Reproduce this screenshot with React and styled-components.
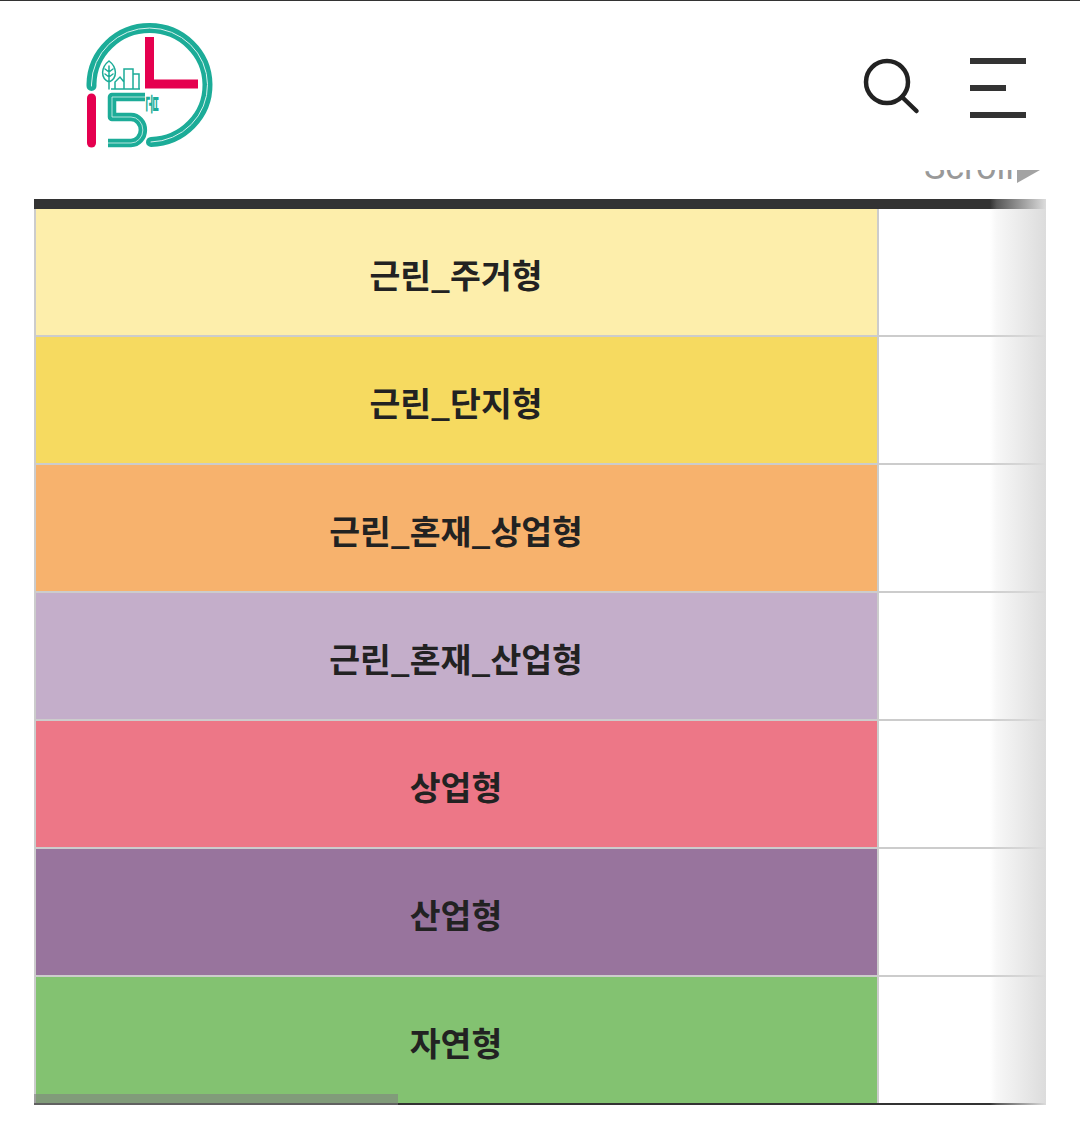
import React from 'react'
import styled, { createGlobalStyle } from 'styled-components'

const rows = [
   { label: '근린_주거형', color: '#fdeeab' },
   { label: '근린_단지형', color: '#f6da60' },
   { label: '근린_혼재_상업형', color: '#f7b26d' },
   { label: '근린_혼재_산업형', color: '#c4aeca' },
   { label: '상업형', color: '#ed7787' },
   { label: '산업형', color: '#98749d' },
   { label: '자연형', color: '#83c271' },
]

const Logo = () => (
   <LogoSvg viewBox="0 0 130 130" width="130" height="130">
      {/* offset: svg 0,0 is page 84,20 */}
      <g fill="none" strokeLinecap="round">
         <path d="M7.5 66 V64 A58 57 0 1 1 67 122" stroke="#1cac98" strokeWidth="10" />
         <path d="M7.5 66 V64 A58 57 0 1 1 67 122" stroke="#d8f2ee" strokeWidth="1" />
         <path d="M61 77 H28 V97 H47 A10.5 11.5 0 0 1 47 123 H24" stroke="#1cac98" strokeWidth="8.5" strokeLinecap="butt" strokeLinejoin="round" />
         <path d="M61 77 H28 V97 H47 A10.5 11.5 0 0 1 47 123 H24" stroke="#d8f2ee" strokeWidth="0.8" strokeLinecap="butt" />
         <path d="M65.5 17 V64 H114" stroke="#e5004f" strokeWidth="9" strokeLinecap="butt" />
         <path d="M7.5 78 V123" stroke="#e5004f" strokeWidth="9" />
         <g stroke="#1cac98" strokeWidth="1.5">
            <path d="M25 41 C17 47 16 58 25 62 C34 58 33 47 25 41 Z M25 46 V69 M25 52 L21 49 M25 52 L29 49 M25 57 L21 54 M25 57 L29 54" />
            <path d="M27 69 H56 M31 69 V62 L36 57 L40 62 M40 69 V49 H49 V69 M49 54 H55 V69" strokeLinecap="butt" />
         </g>
      </g>
      <BunText transform="translate(70 84) rotate(90) scale(1.5 0.85)" textAnchor="middle" dominantBaseline="central">분</BunText>
   </LogoSvg>
)

const SearchIcon = () => (
   <svg viewBox="0 0 58 58" width="58" height="58" fill="none" stroke="#222" strokeWidth="4.5">
      <circle cx="24" cy="25" r="21" />
      <path d="M39 40 L53.5 54" strokeLinecap="round" />
   </svg>
)

const App = () => {
   return (
      <Page>
         <GlobalStyle />
         <Header>
            <Logo />
            <Actions>
               <SearchIcon />
               <MenuButton>
                  <MenuBar />
                  <MenuBar $short />
                  <MenuBar />
               </MenuButton>
            </Actions>
         </Header>
         <ScrollHint>
            <ScrollLabel>Scroll</ScrollLabel>
            <ScrollArrow />
         </ScrollHint>
         <TableWrap>
            <Table>
               {rows.map((row) => (
                  <Row key={row.label}>
                     <NameCell $color={row.color}>{row.label}</NameCell>
                     <EmptyCell />
                  </Row>
               ))}
            </Table>
            <Fade />
            <ScrollThumb />
         </TableWrap>
      </Page>
   )
}

const GlobalStyle = createGlobalStyle`
   html, body {
      margin: 0;
      padding: 0;
      background: #fff;
   }
   body {
      font-family: "Noto Sans CJK KR", "Noto Sans", sans-serif;
   }
`

const Page = styled.div`
   width: 1080px;
   height: 1129px;
   overflow: hidden;
   border-top: 1px solid #333;
   box-sizing: border-box;
`

const Header = styled.header`
   display: flex;
   justify-content: space-between;
   align-items: flex-start;
   height: 169px;
   padding: 19px 54px 0 84px;
   box-sizing: border-box;
`

const LogoSvg = styled.svg`
   display: block;
`

const BunText = styled.text`
   font-family: "Noto Sans CJK KR", sans-serif;
   font-size: 15px;
   font-weight: 700;
   fill: #1cac98;
`

const Actions = styled.div`
   display: flex;
   align-items: flex-start;
   gap: 49px;
   padding-top: 37px;
`

const MenuButton = styled.div`
   display: flex;
   flex-direction: column;
   justify-content: space-between;
   width: 56px;
   height: 60px;
   margin-top: 1px;
`

const MenuBar = styled.span`
   display: block;
   height: 6px;
   width: ${(props) => (props.$short ? '36px' : '56px')};
   background: #333;
`

const ScrollHint = styled.div`
   display: flex;
   justify-content: flex-end;
   align-items: flex-start;
   gap: 3px;
   height: 13px;
   padding-right: 40px;
   overflow: hidden;
`

const ScrollLabel = styled.span`
   font-family: Roboto, "Liberation Sans", sans-serif;
   font-size: 36px;
   font-weight: 400;
   line-height: 36px;
   margin-top: -21px;
   color: #999;
`

const ScrollArrow = styled.span`
   flex: none;
   width: 0;
   height: 0;
   border-left: 23px solid #a3a3a3;
   border-top: 13px solid transparent;
   border-bottom: 13px solid transparent;
   margin-top: -13px;
`

const TableWrap = styled.div`
   position: relative;
   width: 1012px;
   margin: 16px 0 0 34px;
`

const Table = styled.div`
   border-top: 10px solid #333;
   border-bottom: 2px solid #333;
   display: flex;
   flex-direction: column;
`

const Row = styled.div`
   display: flex;
   height: 128px;
   box-sizing: border-box;
   border-bottom: 2px solid #ccc;
   &:last-child {
      height: 126px;
      border-bottom: 0;
   }
`

const NameCell = styled.div`
   display: flex;
   align-items: center;
   justify-content: center;
   width: 845px;
   box-sizing: border-box;
   border-left: 2px solid #ccc;
   border-right: 2px solid #ccc;
   background: ${(props) => props.$color};
   font-size: 33.5px;
   font-weight: 700;
   color: #222;
   line-height: 1;
   padding: 4px 1px 0 0;
`

const EmptyCell = styled.div`
   flex: 1;
   background: #fff;
`

const Fade = styled.div`
   position: absolute;
   top: 0;
   right: 0;
   bottom: 0;
   width: 56px;
   background: linear-gradient(to right, rgba(220, 220, 220, 0) 0%, rgba(220, 220, 220, 0.22) 12%, rgba(220, 220, 220, 0.6) 55%, #dcdcdc 100%);
`

const ScrollThumb = styled.div`
   position: absolute;
   left: 0;
   bottom: 0;
   width: 364px;
   height: 11px;
   background: rgba(128, 128, 128, 0.6);
`

export default App
